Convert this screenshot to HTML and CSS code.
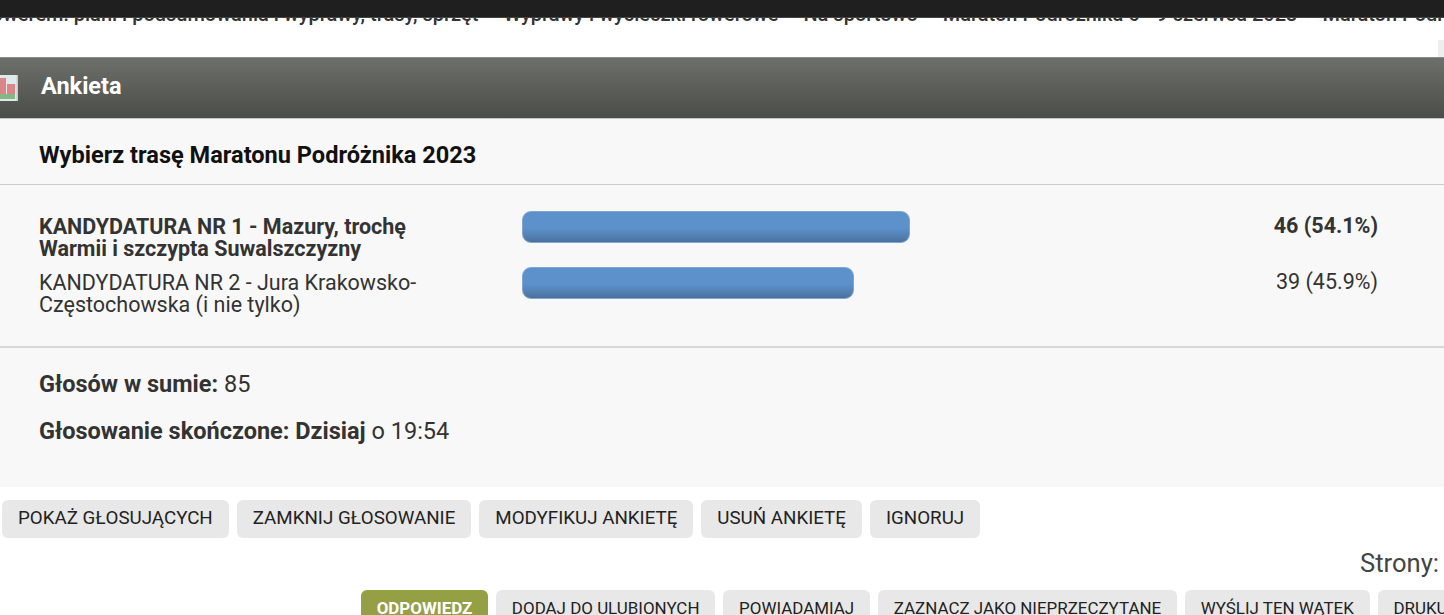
FILE: index.html
```html
<!DOCTYPE html>
<html lang="pl">
<head>
  <meta charset="UTF-8" />
  <meta name="viewport" content="width=device-width, initial-scale=1.0"/>
  <title>Ankieta</title>
  <link rel="stylesheet" href="styles.css">
</head>
<body>

<div class="topbar"></div>

<div class="crumbs">
  <div class="crumbs-inner">
    <span>Rowerem: plani i podsumowania i wyprawy, trasy, sprzęt</span>
    <span>Wyprawy i wycieczki rowerowe</span>
    <span>Na sportowo</span>
    <span>Maraton Podróżnika 6 - 9 czerwca 2023</span>
    <span>Maraton Podróżnika</span>
  </div>
  <div class="scroll-nub"></div>
</div>

<section class="poll">
  <h3 class="poll-head">
    <svg class="poll-icon" width="20" height="26" viewBox="0 0 20 26">
      <rect x="0" y="0" width="20" height="26" fill="#dfe9ec"/>
      <rect x="0" y="3" width="8" height="18" fill="#dc8587"/>
      <rect x="9" y="9" width="8" height="12" fill="#dc8587"/>
      <rect x="0" y="19" width="17" height="5" fill="#86b886"/>
      <rect x="18.5" y="0" width="1.5" height="26" fill="#c3cbcc"/>
    </svg>
    <span class="poll-title">Ankieta</span>
  </h3>

  <div class="poll-body">
    <h4 class="poll-question">Wybierz trasę Maratonu Podróżnika 2023</h4>

    <div class="poll-options">
      <div class="option winner">
        <div class="option-label">KANDYDATURA NR 1 - Mazury, trochę Warmii i szczypta Suwalszczyzny</div>
        <div class="option-track"><div class="bar" style="width: 388px"></div></div>
        <div class="option-votes">46 (54.1%)</div>
      </div>
      <div class="option">
        <div class="option-label">KANDYDATURA NR 2 - Jura Krakowsko-Częstochowska (i nie tylko)</div>
        <div class="option-track"><div class="bar" style="width: 332px"></div></div>
        <div class="option-votes">39 (45.9%)</div>
      </div>
    </div>

    <div class="poll-summary">
      <p><b>Głosów w sumie:</b> 85</p>
      <p><b>Głosowanie skończone: Dzisiaj</b> o 19:54</p>
    </div>
  </div>
</section>

<div class="poll-buttons">
  <a class="btn">Pokaż głosujących</a>
  <a class="btn">Zamknij głosowanie</a>
  <a class="btn">Modyfikuj ankietę</a>
  <a class="btn">Usuń ankietę</a>
  <a class="btn">Ignoruj</a>
</div>

<div class="pages">Strony:</div>

<div class="thread-buttons">
  <a class="btn btn-small btn-reply">Odpowiedz</a>
  <a class="btn btn-small">Dodaj do ulubionych</a>
  <a class="btn btn-small">Powiadamiaj</a>
  <a class="btn btn-small">Zaznacz jako nieprzeczytane</a>
  <a class="btn btn-small">Wyślij ten wątek</a>
  <a class="btn btn-small">Drukuj</a>
</div>

</body>
</html>
```

FILE: styles.css
```css
html, body {
  height: 615px;
  overflow: hidden;
}

body {
  font-family: Roboto, "Liberation Sans", sans-serif;
  background: #fff;
  color: #333;
  margin: 0;
  padding: 0;
}

.topbar {
  height: 17px;
  background: #1f1f1f;
  border-bottom: 1px solid #444;
}

.crumbs {
  height: 39px;
  position: relative;
  overflow: hidden;
}

.crumbs-inner {
  display: flex;
  gap: 25px;
  margin-top: -15px;
  margin-left: -21px;
  white-space: nowrap;
  font-size: 20px;
  font-weight: 500;
  line-height: 22px;
  color: #333;
}

.scroll-nub {
  position: absolute;
  right: 0;
  top: 22px;
  width: 6px;
  height: 17px;
  background: #eee;
}

.poll-head {
  display: flex;
  align-items: center;
  gap: 23px;
  height: 62px;
  margin: 0;
  box-sizing: border-box;
  border-top: 1px solid #8a8c88;
  border-bottom: 1px solid #c4c4c4;
  background: linear-gradient(#6d6f6a, #4b4d49);
  color: #fff;
  font-size: 23.5px;
  font-weight: 700;
}

.poll-title {
  padding-bottom: 4px;
}

.poll-icon {
  margin-left: -2px;
}

.poll-body {
  background: #f8f8f8;
}

.poll-question {
  margin: 0;
  padding: 6px 39px 0;
  height: 66px;
  display: flex;
  align-items: center;
  box-sizing: border-box;
  border-bottom: 1px solid #ccc;
  color: #111;
  font-size: 23.55px;
  font-weight: 700;
}

.poll-options {
  padding: 26px 66px 23px 39px;
  border-bottom: 2px solid #d8d8d8;
}

.option {
  display: flex;
  align-items: flex-start;
  height: 56px;
  font-size: 21.5px;
  line-height: 22px;
}

.option-label {
  width: 386px;
  margin-top: 5px;
  flex: none;
  margin-right: 97px;
}

.winner .option-label,
.winner .option-votes {
  font-weight: 700;
}

.option-track {
  flex: 1;
}

.bar {
  height: 32px;
  border-radius: 9px;
  background: linear-gradient(#5c91cb 0%, #5c91cb 55%, #4c719d 100%);
  border: 1px solid #7fa6d3;
  box-sizing: border-box;
}

.option-votes {
  margin-top: 4px;
  text-align: right;
  white-space: nowrap;
}

.poll-summary {
  padding: 13px 39px 32px;
  font-size: 23.5px;
  color: #333;
}

.poll-summary p {
  margin: 0;
  height: 47px;
  line-height: 47px;
}

.poll-buttons {
  display: flex;
  gap: 8px;
  margin: 13px 0 0 2px;
}

.btn {
  display: block;
  padding: 0 16px;
  height: 38px;
  line-height: 36px;
  background: #e8e8e8;
  border-radius: 6px;
  font-size: 18.75px;
  color: #222;
  text-transform: uppercase;
  white-space: nowrap;
}

.pages {
  margin-top: 10px;
  padding-right: 5px;
  text-align: right;
  font-size: 25.6px;
  line-height: 30px;
  color: #444;
}

.thread-buttons {
  display: flex;
  gap: 8px;
  margin: 12px 0 0 361px;
}

.btn-small {
  font-size: 16.95px;
  padding: 0 15.8px;
  flex: none;
}

.btn-reply {
  background: #95a044;
  color: #fff;
  font-weight: 700;
  padding: 0 15.7px;
}
```
